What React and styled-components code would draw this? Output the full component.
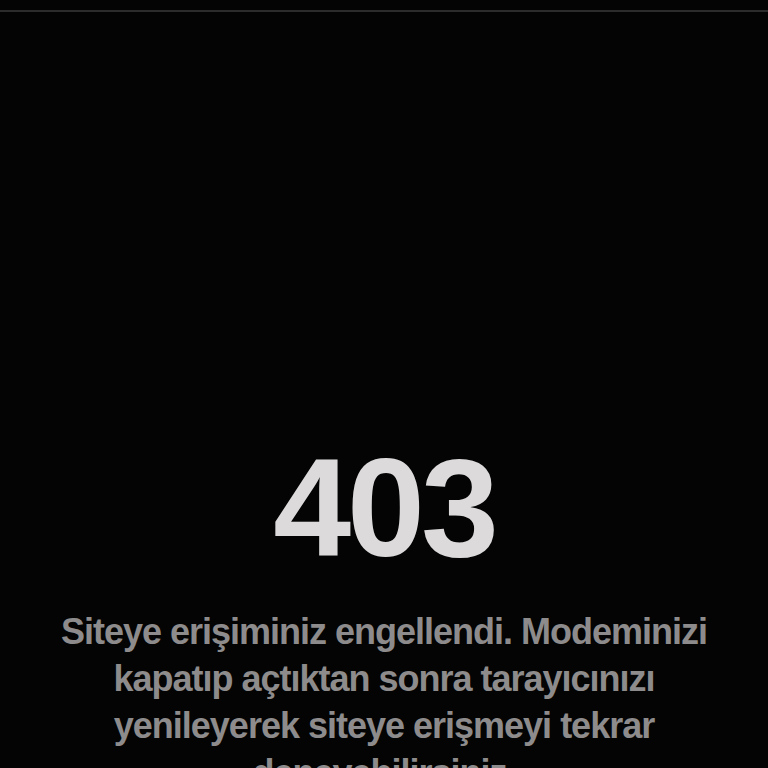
import React from "react";
import styled, { createGlobalStyle } from "styled-components";

const Global = createGlobalStyle`
  html, body { margin: 0; padding: 0; background: #040404; }
  body { font-family: "Liberation Sans", Arial, sans-serif; overflow: hidden; }
`;

const Page = styled.div`
  width: 768px;
  height: 768px;
  overflow: hidden;
  background: #040404;
  display: flex;
  flex-direction: column;
`;

const TopRule = styled.div`
  margin-top: 10px;
  height: 2px;
  background: #2c2c2c;
  flex-shrink: 0;
`;

const Content = styled.main`
  padding: 426px 40px 0;
  display: flex;
  flex-direction: column;
  align-items: center;
  text-align: center;
`;

const Code = styled.h1`
  margin: 0;
  font-size: 140px;
  line-height: 1;
  font-weight: 700;
  letter-spacing: -4px;
  color: #dcdada;
`;

const Message = styled.p`
  margin: 30px 0 0;
  font-size: 36px;
  line-height: 47px;
  font-weight: 700;
  letter-spacing: -1px;
  color: #8d8b8b;
`;

export default function App() {
  return (
    <>
      <Global />
      <Page>
        <TopRule />
        <Content>
          <Code>403</Code>
          <Message>
            Siteye erişiminiz engellendi. Modeminizi kapatıp açtıktan sonra
            tarayıcınızı yenileyerek siteye erişmeyi tekrar deneyebilirsiniz.
          </Message>
        </Content>
      </Page>
    </>
  );
}
